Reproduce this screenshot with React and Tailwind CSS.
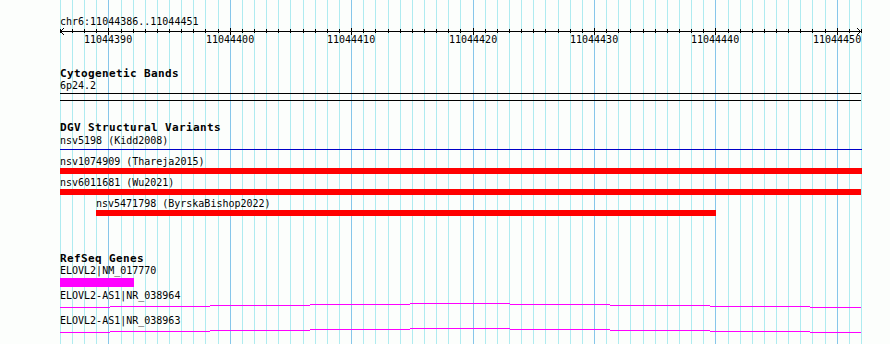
import React from "react";

// GBrowse-style detail panel: chr6:11044386..11044451
const START = 11044386;
const BASES = 66;
const xAt = (i) => Math.round(59.8 + i * 12.14);

const mono = "font-['DejaVu_Sans_Mono','Liberation_Mono',monospace]";

function Grid() {
  const lines = [];
  for (let i = 0; i <= BASES; i++) {
    const major = (START + i) % 10 === 0;
    lines.push(
      <rect
        key={i}
        x={xAt(i)}
        y={0}
        width={1}
        height={344}
        fill={major ? "#86c6ea" : "#aeebf0"}
      />
    );
  }
  return (
    <svg className="absolute inset-0" width="890" height="344">
      {lines}
    </svg>
  );
}

function Ruler() {
  const ticks = [];
  const labels = [];
  for (let i = 0; i <= BASES; i++) {
    const x = xAt(i) + 0.5;
    const major = (START + i) % 10 === 0;
    ticks.push(
      <line
        key={i}
        x1={x}
        x2={x}
        y1={major ? 1 : 2}
        y2={major ? 8 : 6}
        stroke="#000"
        strokeWidth="1"
      />
    );
    if (major) labels.push({ x: xAt(i), text: String(START + i) });
  }

  return (
    <div className="relative h-[20px]">
      <svg className="absolute left-0 top-0" width="890" height="10">
        <line x1="60" x2="861" y1="4.5" y2="4.5" stroke="#000" strokeWidth="1" />
        {ticks}
        <polyline points="64,1 60.5,4.5 64,8" fill="none" stroke="#000" strokeWidth="1" />
        <polyline points="857,1 860.5,4.5 857,8" fill="none" stroke="#000" strokeWidth="1" />
      </svg>
      {labels.map((l) => (
        <span
          key={l.text}
          className="absolute top-[7px] w-[48px] text-center text-[10px] leading-[12px] text-black"
          style={{ left: l.x - 24 }}
        >
          {l.text}
        </span>
      ))}
    </div>
  );
}

const Title = ({ children, className = "" }) => (
  <div className={`pl-[60px] text-[11px] font-bold leading-[13px] tracking-[0.38px] text-black ${className}`}>
    {children}
  </div>
);

const Small = ({ children, className = "" }) => (
  <div className={`pl-[60px] text-[10px] leading-[12px] text-black ${className}`}>{children}</div>
);

const SEGMENTS = [
  { w: 50, y: 5 },
  { w: 100, y: 4 },
  { w: 100, y: 3 },
  { w: 100, y: 2 },
  { w: 100, y: 1 },
  { w: 100, y: 2 },
  { w: 100, y: 3 },
  { w: 100, y: 4 },
  { w: 51, y: 5 },
];

function Transcript() {
  return (
    <div className="flex h-[6px] items-start pl-[60px]">
      {SEGMENTS.map((s, i) => (
        <div key={i} className="h-px bg-[#ff00ff]" style={{ width: s.w, marginTop: s.y }} />
      ))}
    </div>
  );
}

export default function App() {
  return (
    <div className={`relative h-[344px] w-[890px] overflow-hidden bg-[#fcfefc] ${mono}`}>
      <Grid />
      <div className="relative">
        <Small className="pt-[16px]">chr6:11044386..11044451</Small>
        <div className="mt-[-1px]">
          <Ruler />
        </div>

        <Title className="mt-[20px]">Cytogenetic Bands</Title>
        <Small>6p24.2</Small>
        <div className="ml-[60px] mt-[1px] h-px w-[801px] bg-black" />
        <div className="ml-[60px] mt-[6px] h-px w-[801px] bg-black" />

        <Title className="mt-[20px]">DGV Structural Variants</Title>
        <Small className="mt-[1px]">nsv5198 (Kidd2008)</Small>
        <div className="ml-[60px] mt-[2px] h-px w-[802px] bg-[#0000c8]" />
        <Small className="mt-[6px]">nsv1074909 (Thareja2015)</Small>
        <div className="ml-[60px] h-[6px] w-[802px] bg-[#ff0000]" />
        <Small className="mt-[3px]">nsv6011681 (Wu2021)</Small>
        <div className="ml-[60px] h-[6px] w-[801px] bg-[#ff0000]" />
        <Small className="mt-[3px] pl-[96px]">nsv5471798 (ByrskaBishop2022)</Small>
        <div className="ml-[96px] h-[6px] w-[620px] bg-[#ff0000]" />

        <Title className="mt-[36px]">RefSeq Genes</Title>
        <Small>ELOVL2|NM_017770</Small>
        <div className="ml-[60px] mt-[1px] h-[9px] w-[74px] bg-[#ff00ff]" />
        <Small className="mt-[3px]">ELOVL2-AS1|NR_038964</Small>
        <Transcript />
        <Small className="mt-[7px]">ELOVL2-AS1|NR_038963</Small>
        <Transcript />
      </div>
    </div>
  );
}
